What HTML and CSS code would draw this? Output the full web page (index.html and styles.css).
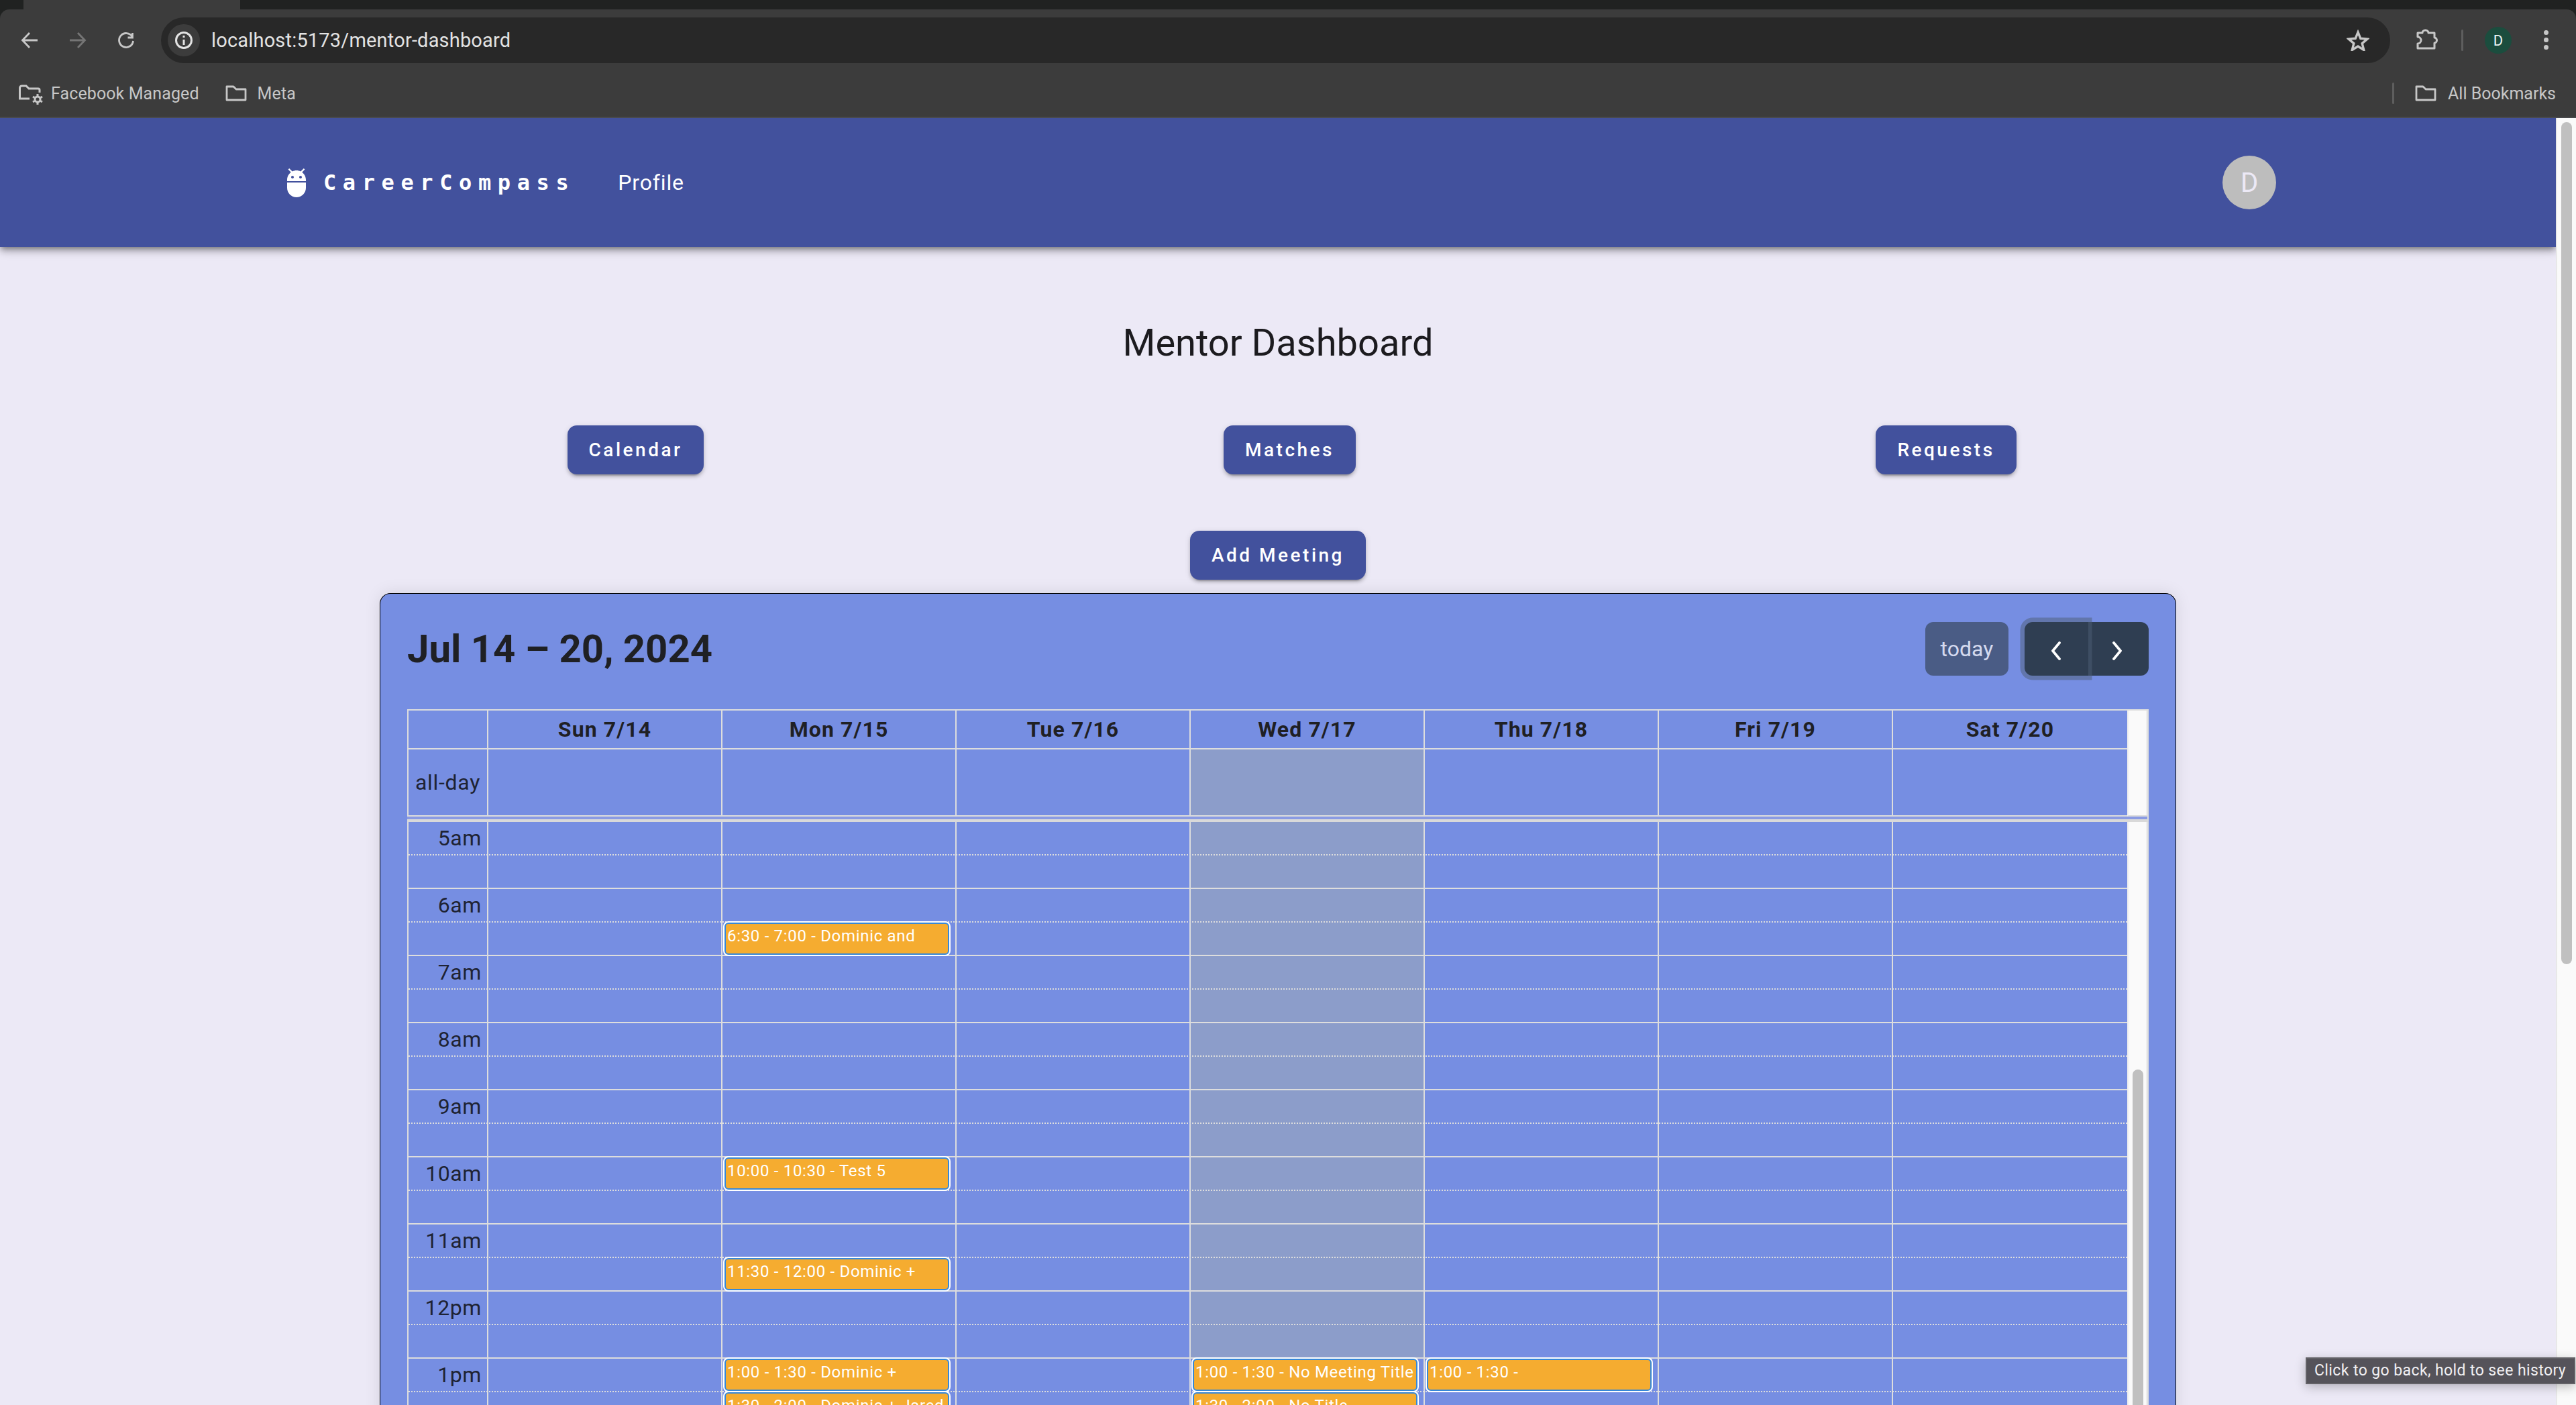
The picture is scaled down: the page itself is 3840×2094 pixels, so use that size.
FILE: index.html
```html
<!DOCTYPE html>
<html lang="en">
<head>
<meta charset="utf-8">
<title>CareerCompass</title>
<link rel="stylesheet" href="styles.css">
</head>
<body>
<div class="window">
  <div class="tabstrip"><div class="tab"></div></div>
  <div class="toolbar">
    <div class="nav-icons">
      <svg class="nav-icon" viewBox="0 0 24 24"><path d="M24 12H2M12 1 1.500 12 12 23"/></svg>
      <svg class="nav-icon dim" viewBox="0 0 24 24"><path d="M0 12h22M12 1l10.500 11L12 23"/></svg>
      <svg class="nav-icon" viewBox="0 0 24 24"><path d="M21 6.500A10.500 10.500 0 1 0 22.500 13M21.500 1v7h-7"/></svg>
    </div>
    <div class="omnibox">
      <div class="site-chip">
        <svg class="info-icon" viewBox="0 0 28 28"><circle cx="14" cy="14" r="11.500"/><path d="M14 13v8M14 7v3"/></svg>
      </div>
      <span class="url">localhost:5173/mentor-dashboard</span>
      <svg class="star" viewBox="0 0 34 32"><path d="M17 4l3.800 9.300 10.200.8-7.800 6.500 2.500 9.900-8.700-5.400-8.700 5.400 2.500-9.900L3 14.100l10.200-.8z"/></svg>
    </div>
    <svg class="ext-icon" viewBox="0 0 32 32"><path d="M2 7h7a4.500 4 0 0 1 9 0h9v7a3.500 4 0 0 1 0 8v8H2v-7a5 5 0 0 0 0-10z"/></svg>
    <div class="tool-sep"></div>
    <div class="profile-chip">D</div>
    <div class="kebab"><i></i><i></i><i></i></div>
  </div>
  <div class="bookmarks">
    <svg class="managed-icon" viewBox="0 0 37 32"><path class="stroke" d="M17 22H2.500V6A3 3 0 0 1 5.500 3H12l4 4h14a2 2 0 0 1 2 2v4"/><circle class="stroke" cx="29" cy="23" r="4"/><path class="stroke" d="M29 15v3M29 28v3M22 19l2.500 1.500M36 19l-2.500 1.500M22 27l2.500-1.500M36 27l-2.500-1.500"/></svg>
    <span class="bookmark-label">Facebook Managed</span>
    <svg class="folder-icon meta-folder" viewBox="0 0 32 24"><path d="M2 2h10l4 4h14v16H2z"/></svg>
    <span class="bookmark-label meta-label">Meta</span>
    <div class="bookmark-sep"></div>
    <svg class="folder-icon" viewBox="0 0 32 24"><path d="M2 2h10l4 4h14v16H2z"/></svg>
    <span class="bookmark-label all-label">All Bookmarks</span>
  </div>
  <div class="viewport">
    <main class="content">
      <header class="appbar">
        <svg class="logo" viewBox="0 0 24 24"><path d="M5 16c0 3.870 3.130 7 7 7s7-3.130 7-7v-4H5v4zM16.120 4.370l2.100-2.100-.82-.83-2.300 2.310C14.160 3.280 13.120 3 12 3s-2.160.28-3.090.75L6.600 1.440l-.82.83 2.100 2.100C6.140 5.640 5 7.680 5 10v1h14v-1c0-2.320-1.140-4.360-2.880-5.630zM9 9c-.55 0-1-.45-1-1s.45-1 1-1 1 .45 1 1-.45 1-1 1zm6 0c-.55 0-1-.45-1-1s.45-1 1-1 1 .45 1 1-.45 1-1 1z"/></svg>
        <span class="brand">CareerCompass</span>
        <a class="nav-link">Profile</a>
        <div class="avatar">D</div>
      </header>
      <h1 class="page-title">Mentor Dashboard</h1>
      <div class="action-grid">
        <div class="action-cell"><button class="btn">Calendar</button></div>
        <div class="action-cell"><button class="btn">Matches</button></div>
        <div class="action-cell"><button class="btn">Requests</button></div>
      </div>
      <div class="add-row"><button class="btn">Add Meeting</button></div>
      <section class="card">
        <div class="cal-toolbar">
          <h2 class="cal-title">Jul 14 – 20, 2024</h2>
          <button class="fc-today">today</button>
          <div class="fc-group">
            <button class="fc-nav fc-prev"><svg viewBox="0 0 16 28"><path d="M13 2 3 14l10 12"/></svg></button>
            <button class="fc-nav fc-next"><svg viewBox="0 0 16 28"><path d="M3 2l10 12L3 26"/></svg></button>
          </div>
        </div>
        <div class="cal-table">
          <div class="cal-row head-row">
            <div class="cell axis-cell"></div>
            <div class="cell">Sun 7/14</div>
            <div class="cell">Mon 7/15</div>
            <div class="cell">Tue 7/16</div>
            <div class="cell">Wed 7/17</div>
            <div class="cell">Thu 7/18</div>
            <div class="cell">Fri 7/19</div>
            <div class="cell last">Sat 7/20</div>
            <div class="gutter"></div>
          </div>
          <div class="cal-row allday-row">
            <div class="cell axis-cell">all-day</div>
            <div class="cell"></div>
            <div class="cell"></div>
            <div class="cell"></div>
            <div class="cell today"></div>
            <div class="cell"></div>
            <div class="cell"></div>
            <div class="cell last"></div>
            <div class="gutter"></div>
          </div>
          <div class="cal-divider"></div>
          <div class="time-grid">
            <div class="time-main">
              <div class="day-layer"><div class="today-band"></div></div>
              <div class="slots">
                <div class="slot half"><span>5am</span></div><div class="slot"></div>
                <div class="slot half"><span>6am</span></div><div class="slot"></div>
                <div class="slot half"><span>7am</span></div><div class="slot"></div>
                <div class="slot half"><span>8am</span></div><div class="slot"></div>
                <div class="slot half"><span>9am</span></div><div class="slot"></div>
                <div class="slot half"><span>10am</span></div><div class="slot"></div>
                <div class="slot half"><span>11am</span></div><div class="slot"></div>
                <div class="slot half"><span>12pm</span></div><div class="slot"></div>
                <div class="slot half"><span>1pm</span></div><div class="slot"></div>
              </div>
              <div class="day-columns">
                <div class="day"></div>
                <div class="day">
                  <div class="event" style="top:150px">6:30 - 7:00 - Dominic and</div>
                  <div class="event" style="top:500px">10:00 - 10:30 - Test 5</div>
                  <div class="event" style="top:650px">11:30 - 12:00 - Dominic +</div>
                  <div class="event" style="top:800px">1:00 - 1:30 - Dominic +</div>
                  <div class="event" style="top:850px">1:30 - 2:00 - Dominic + Jared</div>
                </div>
                <div class="day"></div>
                <div class="day">
                  <div class="event" style="top:800px">1:00 - 1:30 - No Meeting Title</div>
                  <div class="event" style="top:850px">1:30 - 2:00 - No Title</div>
                </div>
                <div class="day">
                  <div class="event" style="top:800px">1:00 - 1:30 -</div>
                </div>
                <div class="day"></div>
                <div class="day last"></div>
              </div>
            </div>
            <div class="inner-scroll"><div class="inner-thumb"></div></div>
          </div>
        </div>
      </section>
    </main>
    <div class="page-scroll"><div class="page-thumb"></div></div>
  </div>
  <div class="tooltip">Click to go back, hold to see history</div>
</div>
</body>
</html>
```
FILE: styles.css
```css
* { box-sizing: border-box; }
html, body { margin: 0; padding: 0; height: 100%; overflow: hidden; background: #202221; }
body { font-family: Roboto, "Liberation Sans", sans-serif; }
.window { width: 3840px; height: 2094px; display: flex; flex-direction: column; overflow: hidden; position: relative; }

/* browser chrome */
.tabstrip { height: 14px; background: #202221; position: relative; flex: none; }
.tab { margin-left: 35px; width: 323px; height: 14px; background: #3c3c3c; }
.toolbar { height: 90px; flex: none; background: #3c3c3c; border-radius: 14px 14px 0 0; display: flex; align-items: flex-start; padding: 12px 40px 0 32px; }
.nav-icons { display: flex; gap: 48px; margin-top: 22px; }
.nav-icon { width: 24px; height: 24px; fill: none; stroke: #c7c7c7; stroke-width: 2.800; overflow: visible; }
.nav-icon.dim { stroke: #757575; }
.omnibox { flex: 1; height: 68px; margin-left: 40px; background: #282828; border-radius: 34px; display: flex; align-items: center; padding: 0 31px 0 10px; }
.site-chip { width: 48px; height: 48px; border-radius: 50%; background: #3c3c3c; display: flex; align-items: center; justify-content: center; }
.info-icon { width: 28px; height: 28px; fill: none; stroke: #e3e3e3; stroke-width: 3; }
.url { margin-left: 17px; font-size: 29px; letter-spacing: .18px; color: #e3e3e3; flex: 1; white-space: nowrap; }
.star { width: 34px; height: 32px; fill: none; stroke: #c7c7c7; stroke-width: 3.400; }
.ext-icon { width: 32px; height: 32px; margin: 16px 0 0 39px; fill: none; stroke: #c7c7c7; stroke-width: 3; stroke-linejoin: round; overflow: visible; }
.tool-sep { width: 3px; height: 32px; margin: 18px 0 0 35px; background: #5e5e5e; border-radius: 2px; }
.profile-chip { width: 40px; height: 40px; margin: 14px 0 0 32px; border-radius: 50%; background: #1b4d3e; color: #e9f2ee; font-size: 22px; display: flex; align-items: center; justify-content: center; }
.kebab { width: 8px; margin: 19px 0 0 48px; display: flex; flex-direction: column; gap: 4px; }
.kebab i { display: block; width: 7px; height: 7px; border-radius: 50%; background: #c7c7c7; }

.bookmarks { height: 72px; flex: none; background: #3c3c3c; border-bottom: 2px solid #494a4d; display: flex; align-items: center; padding: 0 30px 0 27px; }
.managed-icon { width: 37px; height: 32px; margin-top: 4px; fill: none; overflow: visible; }
.managed-icon .stroke { fill: none; stroke: #c7c7c7; stroke-width: 3; }
.bookmark-label { margin-left: 12px; font-size: 25px; letter-spacing: .1px; color: #c7c7c7; white-space: nowrap; }
.folder-icon { width: 32px; height: 24px; fill: none; stroke: #c7c7c7; stroke-width: 2.800; stroke-linejoin: round; }
.meta-folder { margin-left: 39px; }
.meta-label { margin-left: 16px; }
.bookmark-sep { width: 3px; height: 32px; margin-left: auto; margin-right: 31px; background: #5e5e5e; border-radius: 2px; }
.all-label { margin-left: 17px; letter-spacing: 0; }

/* page */
.viewport { flex: 1; display: flex; min-height: 0; }
.content { flex: 1; min-width: 0; background: #ece9f6; overflow: hidden; }
.page-scroll { width: 30px; flex: none; background: #fafafa; border-left: 2px solid #e8e8e8; padding: 6px 6px 0 6px; }
.page-thumb { width: 16px; height: 1255px; border-radius: 8px; background: #c0c0c0; }

.appbar { height: 192px; background: #42519d; display: flex; align-items: center; padding: 0 417px 0 418px; color: #fff; box-shadow: 0 4px 8px -2px rgba(0,0,0,.4), 0 8px 10px rgba(0,0,0,.14), 0 2px 20px rgba(0,0,0,.12); position: relative; }
.logo { width: 48px; height: 48px; fill: #fff; flex: none; }
.brand { margin-left: 16px; font-family: "DejaVu Sans Mono", monospace; font-weight: 700; font-size: 32px; letter-spacing: 9.600px; white-space: nowrap; }
.nav-link { margin-left: 64px; font-size: 32px; letter-spacing: .85px; color: #fff; }
.avatar { margin-left: auto; width: 80px; height: 80px; border-radius: 50%; background: #bdbdbd; color: #ece9f6; font-size: 40px; display: flex; align-items: center; justify-content: center; }

.page-title { margin: 107px 0 0; height: 72px; line-height: 72px; text-align: center; font-size: 56px; font-weight: 400; color: #1c1b1f; }
.action-grid { margin: 87px 0 0 460px; display: grid; grid-template-columns: 975px 975px 982px; }
.action-cell { display: flex; justify-content: center; }
.add-row { margin-top: 84px; display: flex; justify-content: center; }
.btn { height: 73px; padding: 0 32px; border: 0; border-radius: 14px; background: #42519d; color: #fff; font-family: inherit; font-size: 28px; font-weight: 500; letter-spacing: 3.500px; box-shadow: 0 6px 2px -4px rgba(0,0,0,.2), 0 4px 4px rgba(0,0,0,.14), 0 2px 10px rgba(0,0,0,.12); }

.card { width: 2678px; margin: 20px auto 0; background: #768ee2; border: 1px solid #000; border-bottom: 0; border-radius: 16px 16px 0 0; padding: 42px 40px 0; box-shadow: 0 0 24px rgba(0,0,0,.1); }
.cal-toolbar { display: flex; align-items: center; height: 80px; }
.cal-title { margin: 0 auto 0 0; font-size: 58px; font-weight: 700; color: #1f2024; }
.fc-today { width: 124px; height: 80px; border: 0; border-radius: 12px; background: #4a5c85; color: #d4d9ee; font-family: inherit; font-size: 32px; }
.fc-group { margin-left: 24px; display: flex; position: relative; }
.fc-nav { height: 80px; border: 0; background: #2f3e52; display: flex; align-items: center; justify-content: center; padding: 6px 0 0; }
.fc-nav svg { width: 16px; height: 28px; fill: none; stroke: #fff; stroke-width: 3.800; stroke-linecap: round; stroke-linejoin: round; }
.fc-prev { width: 94.500px; border-radius: 12px 0 0 12px; position: relative; z-index: 1; box-shadow: 0 0 0 6.500px rgba(78,93,117,.5); clip-path: inset(-7px -6px -7px -7px round 12px 0 0 12px); }
.fc-next { width: 90.500px; border-radius: 0 12px 12px 0; padding-right: 4px; }

.cal-table { margin-top: 50px; }
.cal-row { display: grid; grid-template-columns: 121px repeat(7, 349px) 32px; }
.cell { border-right: 2px solid #ddd; }
.cell.last { border-right: 0; }
.axis-cell { border-left: 2px solid #ddd; }
.head-row { height: 60px; border-top: 2px solid #ddd; font-size: 32px; font-weight: 700; color: #1f2024; letter-spacing: 1.100px; }
.head-row .cell { border-bottom: 2px solid #ddd; display: flex; align-items: center; justify-content: center; }
.allday-row { height: 100px; }
.allday-row .cell { border-bottom: 2px solid #ddd; }
.allday-row .gutter { border-bottom: 2px solid #ddd; }
.allday-row .axis-cell { display: flex; align-items: center; justify-content: flex-end; padding-right: 10px; font-size: 32px; letter-spacing: .7px; color: #1e2333; }
.today { background: #8c9dca; }
.gutter { background: #fafafa; border-left: 2px solid #eee; border-right: 2px solid #ddd; box-shadow: inset -2px 0 0 #eee; }
.cal-divider { height: 8px; background: #8a9be3; border-bottom: 4px solid #d9d9d9; border-right: 2px solid #ddd; }

.time-grid { display: flex; height: 900px; }
.time-main { position: relative; width: 2564px; flex: none; border-left: 2px solid #ddd; }
.day-layer, .day-columns { position: absolute; top: 0; left: 119px; display: grid; grid-template-columns: repeat(7, 349px); }
.today-band { grid-column: 4; height: 798px; background: #8c9dca; }
.slots { position: relative; }
.slot { height: 50px; border-bottom: 2px solid #ddd; display: flex; justify-content: flex-end; width: 2562px; }
.slot.half { border-bottom: 2px dotted #ddd; }
.slot span { width: 119px; padding-right: 10px; margin-right: auto; text-align: right; font-size: 32px; letter-spacing: .6px; line-height: 48px; color: #1e2333; }
.day-columns { height: 900px; border-left: 2px solid #ddd; margin-left: -2px; }
.day { position: relative; border-right: 2px solid #ddd; height: 900px; }
.day.last { border-right: 0; }
.event { position: absolute; left: 3px; right: 9px; height: 48px; border: 2px solid #3788d8; border-radius: 6px; background: #f5ac30; box-shadow: 0 0 0 2px #fff; color: #fff; font-size: 24px; letter-spacing: .68px; line-height: 36px; padding: 0 2px; white-space: nowrap; overflow: hidden; }
.inner-scroll { width: 32px; flex: none; background: #fafafa; border-left: 2px solid #eee; border-right: 2px solid #ddd; box-shadow: inset -2px 0 0 #eee; padding: 369px 0 0 6px; }
.inner-thumb { width: 16px; height: 520px; border-radius: 8px 8px 0 0; background: #c0c0c0; }

.tooltip { position: absolute; left: 3437px; top: 2023px; width: 402px; height: 40px; background: #55535a; border: 2px solid #636267; color: #f0eff2; font-size: 23px; letter-spacing: .4px; line-height: 36px; padding-left: 11px; white-space: nowrap; box-shadow: 0 4px 16px rgba(0,0,0,.25); }
```
